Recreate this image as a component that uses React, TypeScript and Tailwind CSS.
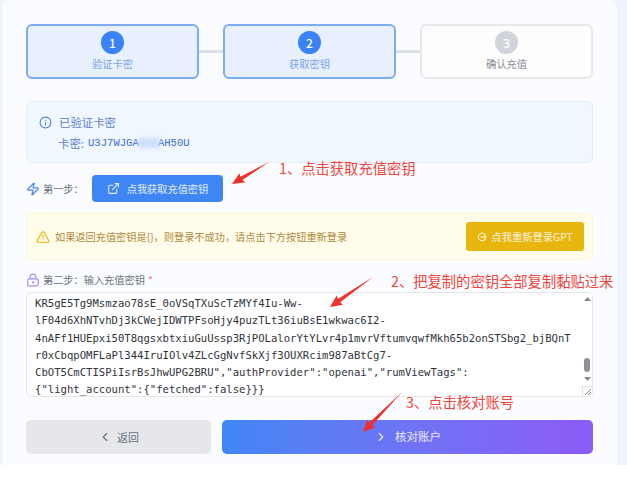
import { ChevronLeft, ChevronRight, ExternalLink, Info, LockKeyhole, TriangleAlert, Zap } from 'lucide-react'

const font = { fontFamily: '"Noto Sans CJK SC", "Noto Sans", sans-serif' }

const steps = [
    { n: 1, label: '验证卡密', active: true },
    { n: 2, label: '获取密钥', active: true },
    { n: 3, label: '确认充值', active: false },
]

const keyLines = [
    'KR5gE5Tg9Msmzao78sE_0oVSqTXuScTzMYf4Iu-Ww-',
    'lF04d6XhNTvhDj3kCWejIDWTPFsoHjy4puzTLt36iuBsE1wkwac6I2-',
    '4nAFf1HUEpxi50T8qgsxbtxiuGuUssp3RjPOLalorYtYLvr4p1mvrVftumvqwfMkh65b2onSTSbg2_bjBQnT',
    'r0xCbqpOMFLaPl344IruIOlv4ZLcGgNvfSkXjf3OUXRcim987aBtCg7-',
    'CbOT5CmCTISPiIsrBsJhwUPG2BRU","authProvider":"openai","rumViewTags":',
    '{"light_account":{"fetched":false}}}',
]

function Arrow({ className, x1, y1, x2, y2 }: { className: string; x1: number; y1: number; x2: number; y2: number }) {
    // thin tail, wide barbed head
    const a = Math.atan2(y2 - y1, x2 - x1)
    const p = (d: number, s: number) => `${x2 - Math.cos(a) * d - Math.sin(a) * s},${y2 - Math.sin(a) * d + Math.cos(a) * s}`
    return (
        <svg className={`absolute ${className}`} width="70" height="60" viewBox="0 0 70 60">
            <polygon points={`${x1},${y1} ${p(11, 2)} ${p(12, 5.5)} ${x2},${y2} ${p(12, -5.5)} ${p(11, -2)}`} fill="#f0302a" />
        </svg>
    )
}

export default function App() {
    return (
        <div className="relative w-[627px] h-[478px] bg-white overflow-hidden" style={font}>
            <div className="h-[465px] bg-[#eff3fe] pl-[2px]">
                <div className="w-[615px] h-[465px] bg-[#fbfcff] rounded-t-[8px] px-6 pt-6">
                    <div className="flex items-center">
                        {steps.map((s, i) => (
                            <div key={s.n} className="contents">
                                {i > 0 && <div className="w-6 h-[3px] bg-[#dcdfe4]" />}
                                <div className={`w-[173px] h-[55px] rounded-[6px] border-2 flex flex-col items-center pt-[5px] ${s.active ? 'border-[#7cabf0] bg-[#e8f0fe]' : 'border-[#e6e8ec] bg-[#fdfdfe]'}`}>
                                    <div className={`w-[23px] h-[23px] rounded-full flex items-center justify-center text-[12px] font-medium text-white ${s.active ? 'bg-[#3b82f6]' : 'bg-[#d1d5db]'}`}>
                                        {s.n}
                                    </div>
                                    <div className={`text-[10.3px] leading-[14px] mt-[3px] ${s.active ? 'text-[#7ba6e8]' : 'text-[#8b9098]'}`}>{s.label}</div>
                                </div>
                            </div>
                        ))}
                    </div>

                    <div className="mt-[22px] h-[62px] rounded-[6px] border border-[#e2ecfb] bg-[#f1f7fe] pl-3 pt-[11px]">
                        <div className="flex items-center gap-[7px] text-[11.4px] leading-[18px] text-[#5b80d0]">
                            <Info size={13} strokeWidth={2} className="text-[#4b82e0]" />
                            已验证卡密
                        </div>
                        <div className="relative mt-[4px] pl-[19px] text-[11.4px] leading-[16px] text-[#5b80d0] flex items-center">
                            卡密:
                            <span className="ml-[4px] text-[#3a6fd0] text-[10.6px]" style={{ fontFamily: '"Liberation Mono", monospace' }}>U3J7WJGA&nbsp;&nbsp;&nbsp;AH50U</span>
                            <div className="absolute left-[99px] top-[3px] w-[22px] h-[10px] bg-[#cddffa] blur-[2px]" />
                        </div>
                    </div>

                    <div className="mt-[12px] flex items-center">
                        <Zap size={14} strokeWidth={2} className="text-[#3b82f6]" />
                        <span className="ml-[3px] w-[49px] text-[10.2px] text-[#6b7280]">{'第一步\uFF1A'}</span>
                        <button className="w-[131px] h-[27px] rounded-[4px] bg-[#3f86f5] text-white/85 text-[10.2px] flex items-center justify-center gap-[7px]">
                            <ExternalLink size={13} />
                            点我获取充值密钥
                        </button>
                    </div>

                    <div className="mt-[11px] h-[47px] rounded-[6px] border border-[#fdf5cf] bg-[#fffce9] pl-[9px] pr-[8px] flex items-center">
                        <TriangleAlert size={14} strokeWidth={2} className="text-[#eab308]" />
                        <span className="ml-[5px] text-[10.2px] text-[#b08a40]">{'如果返回充值密钥是{}\uFF0C则登录不成功\uFF0C请点击下方按钮重新登录'}</span>
                        <button className="ml-auto w-[118px] h-[29px] rounded-[3px] bg-[#e8b40e] text-white/85 text-[10.3px] flex items-center justify-center gap-[4px]">
                            <svg width="10" height="10" viewBox="0 0 24 24" fill="none" stroke="currentColor" strokeWidth="2.5" strokeLinecap="round" strokeLinejoin="round">
                                <path d="M20 8a9 9 0 1 0 0 8" />
                                <path d="M9 12h13M18 9l3 3-3 3" />
                            </svg>
                            点我重新登录GPT
                        </button>
                    </div>

                    <div className="mt-[11px] h-[17px] flex items-center text-[10.2px] text-[#6b7280]">
                        <LockKeyhole size={14} strokeWidth={2} className="text-[#a78bfa]" />
                        <span className="ml-[3px]">{'第二步\uFF1A输入充值密钥'}</span>
                        <span className="ml-[3px] text-[#ef6a6a]">*</span>
                    </div>

                    <div className="relative mt-[4px] h-[105px] rounded-[5px] border border-[#e5e7eb] bg-white overflow-hidden">
                        <div className="pl-[8px] pt-[2px] text-[10.6px] leading-[17.3px] text-[#2f343a] whitespace-pre" style={{ fontFamily: '"DejaVu Sans Mono", monospace' }}>
                            {keyLines.map((line) => (
                                <div key={line}>{line}</div>
                            ))}
                        </div>
                        <div className="absolute right-0 top-0 bottom-0 w-[10px] bg-white flex flex-col items-center">
                            <svg className="mt-[4px]" width="7" height="4" viewBox="0 0 7 4"><path d="M3.5 0L7 4H0z" fill="#85888d" /></svg>
                            <div className="mt-[57px] w-[6px] h-[14px] rounded-full bg-[#8e9196]" />
                            <svg className="mt-[5px]" width="7" height="4" viewBox="0 0 7 4"><path d="M0 0h7L3.5 4z" fill="#85888d" /></svg>
                        </div>
                        <div className="absolute right-0 bottom-0 w-[10px] h-[10px] bg-white border-l border-t border-[#e2e2e2]">
                            <svg width="9" height="9" viewBox="0 0 9 9"><path d="M2 8L8 2M5 8l3-3" stroke="#8a8a8a" strokeWidth="1" /></svg>
                        </div>
                    </div>

                    <div className="mt-[23px] flex gap-[11px]">
                        <button className="w-[185px] h-[34px] rounded-[5px] bg-[#e5e7eb] text-[#6b7280] text-[11px] flex items-center justify-center gap-[5px]">
                            <ChevronLeft size={14} />
                            返回
                        </button>
                        <button className="flex-1 h-[34px] rounded-[5px] bg-gradient-to-r from-[#3f86f5] to-[#8b5cf6] text-white/85 text-[11.5px] flex items-center justify-center gap-[7px]">
                            <ChevronRight size={14} />
                            核对账户
                        </button>
                    </div>
                </div>
            </div>

            {/* red annotations drawn over the screenshot */}
            <div className="absolute left-[279px] top-[158px] text-[14.3px] leading-5 text-[#f0443a] whitespace-nowrap">1、点击获取充值密钥</div>
            <div className="absolute left-[391px] top-[271px] text-[14.3px] leading-5 text-[#f0443a] whitespace-nowrap">2、把复制的密钥全部复制黏贴过来</div>
            <div className="absolute left-[406px] top-[392px] text-[14.3px] leading-5 text-[#f0443a] whitespace-nowrap">3、点击核对账号</div>
            <Arrow className="left-[222px] top-[150px]" x1={47} y1={12} x2={10} y2={34} />
            <Arrow className="left-[320px] top-[270px]" x1={53} y1={7} x2={10} y2={37} />
            <Arrow className="left-[355px] top-[385px]" x1={47} y1={7} x2={8} y2={47} />
        </div>
    )
}
